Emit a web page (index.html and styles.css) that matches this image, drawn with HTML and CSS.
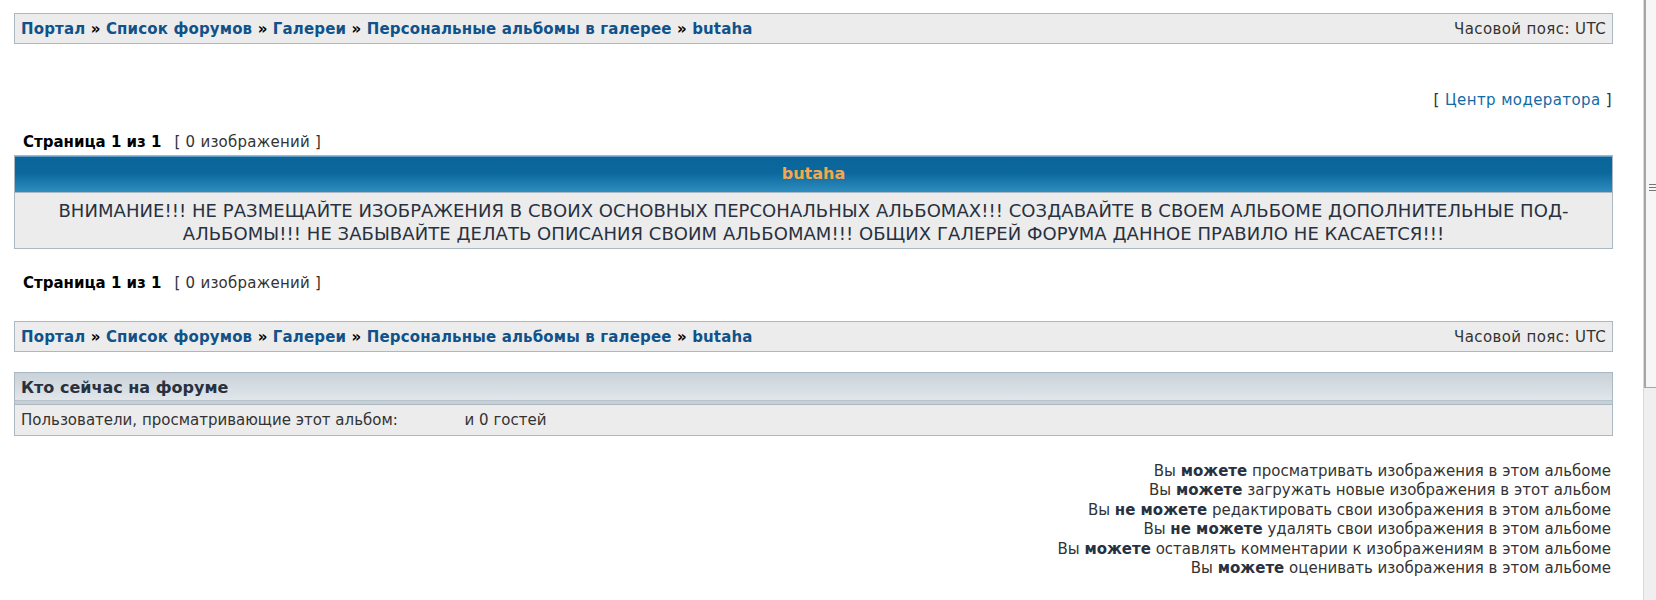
FILE: index.html
```
<!DOCTYPE html>
<html lang="ru">
<head>
    <meta charset="UTF-8">
    <title>butaha - Персональные альбомы в галерее</title>
    <link rel="stylesheet" href="styles.css">
</head>
<body>
    <div class="page">
        <div class="navbar">
            <div class="crumbs">
                <a href="#">Портал</a> <span class="sep">&raquo;</span>
                <a href="#">Список форумов</a> <span class="sep">&raquo;</span>
                <a href="#">Галереи</a> <span class="sep">&raquo;</span>
                <a href="#">Персональные альбомы в галерее</a> <span class="sep">&raquo;</span>
                <a href="#">butaha</a>
            </div>
            <div class="timezone">Часовой пояс: UTC</div>
        </div>

        <div class="mcp-link">[ <a href="#">Центр модератора</a> ]</div>

        <div class="pagination"><b>Страница 1 из 1</b><span class="count">[ 0 изображений ]</span></div>

        <div class="album">
            <div class="album-title">butaha</div>
            <div class="album-desc">ВНИМАНИЕ!!! НЕ РАЗМЕЩАЙТЕ ИЗОБРАЖЕНИЯ В СВОИХ ОСНОВНЫХ ПЕРСОНАЛЬНЫХ АЛЬБОМАХ!!! СОЗДАВАЙТЕ В СВОЕМ АЛЬБОМЕ ДОПОЛНИТЕЛЬНЫЕ ПОД-АЛЬБОМЫ!!! НЕ ЗАБЫВАЙТЕ ДЕЛАТЬ ОПИСАНИЯ СВОИМ АЛЬБОМАМ!!! ОБЩИХ ГАЛЕРЕЙ ФОРУМА ДАННОЕ ПРАВИЛО НЕ КАСАЕТСЯ!!!</div>
        </div>

        <div class="pagination pagination-bottom"><b>Страница 1 из 1</b><span class="count">[ 0 изображений ]</span></div>

        <div class="navbar navbar-bottom">
            <div class="crumbs">
                <a href="#">Портал</a> <span class="sep">&raquo;</span>
                <a href="#">Список форумов</a> <span class="sep">&raquo;</span>
                <a href="#">Галереи</a> <span class="sep">&raquo;</span>
                <a href="#">Персональные альбомы в галерее</a> <span class="sep">&raquo;</span>
                <a href="#">butaha</a>
            </div>
            <div class="timezone">Часовой пояс: UTC</div>
        </div>

        <div class="online">
            <div class="online-head">Кто сейчас на форуме</div>
            <div class="online-row">Пользователи, просматривающие этот альбом: <span class="online-users"></span>и 0 гостей</div>
        </div>

        <div class="rules">
            Вы <b>можете</b> просматривать изображения в этом альбоме<br>
            Вы <b>можете</b> загружать новые изображения в этот альбом<br>
            Вы <b>не можете</b> редактировать свои изображения в этом альбоме<br>
            Вы <b>не можете</b> удалять свои изображения в этом альбоме<br>
            Вы <b>можете</b> оставлять комментарии к изображениям в этом альбоме<br>
            Вы <b>можете</b> оценивать изображения в этом альбоме
        </div>
    </div>

    <!-- полоса прокрутки как на скриншоте -->
    <div class="scrollbar"><div class="thumb"><span class="grip"></span></div></div>
</body>
</html>
```

FILE: styles.css
```
body {
    margin: 0;
    font-family: "DejaVu Sans", Verdana, sans-serif;
    font-size: 15px;
    color: #333;
    background-color: #fff;
}
a {
    text-decoration: none;
}
.page {
    width: 1599px;
    margin: 13px 0 0 14px;
}
.navbar {
    display: flex;
    justify-content: space-between;
    align-items: center;
    height: 29px;
    padding: 0 6px;
    background-color: #ececec;
    border: 1px solid #a9b8c2;
}
.crumbs {
    font-weight: bold;
    letter-spacing: 0.15px;
}
.crumbs a {
    color: #105289;
}
.sep {
    color: #000;
}
.timezone {
    color: #333;
    letter-spacing: 0.4px;
}
.mcp-link {
    text-align: right;
    margin-top: 47px;
    padding-right: 1px;
    letter-spacing: 0.4px;
}
.mcp-link a {
    color: #1569a5;
}
.pagination {
    margin-top: 24px;
    padding-left: 9px;
    line-height: 18px;
}
.pagination b {
    color: #000;
}
.count {
    margin-left: 13px;
    letter-spacing: 0.25px;
}
.album {
    margin-top: 4px;
    border: 1px solid #a9b8c2;
}
.album-title {
    height: 35px;
    line-height: 33px;
    text-align: center;
    font-weight: bold;
    font-size: 16px;
    color: #f7a64a;
    background: linear-gradient(#0a6599 0%, #0b689d 45%, #2f8dbf 100%);
    border-top: 1px solid #5f9bc4;
    border-bottom: 1px solid #a9b8c2;
}
.album-desc {
    padding: 6px 10px 3px;
    text-align: center;
    font-size: 18px;
    line-height: 23px;
    letter-spacing: 0.05px;
    color: #28313f;
    background-color: #ececec;
}
.pagination-bottom {
    margin-top: 25px;
}
.navbar-bottom {
    margin-top: 29px;
}
.online {
    margin-top: 20px;
    border: 1px solid #a9b8c2;
}
.online-head {
    height: 28px;
    line-height: 29px;
    padding-left: 6px;
    font-weight: bold;
    font-size: 16px;
    color: #28313f;
    background: linear-gradient(#c9d2d9, #e2e7eb);
    border-bottom: 3px solid #c8d0d6;
    box-shadow: inset 0 -1px 0 #b8c4cc;
}
.online-row {
    height: 30px;
    line-height: 30px;
    padding-left: 6px;
    background-color: #ececec;
    border-top: 1px solid #a9b8c2;
}
.online-users {
    display: inline-block;
    width: 62px;
}
.rules {
    margin-top: 26px;
    padding-right: 2px;
    text-align: right;
    line-height: 19.4px;
    color: #333;
}
.rules b {
    color: #28313f;
}
.scrollbar {
    position: fixed;
    top: 0;
    right: 0;
    width: 12px;
    height: 100%;
    background-color: #efefef;
    border-left: 1px solid #d8d8d8;
}
.thumb {
    position: relative;
    height: 387px;
    background-color: #f6f6f6;
    border-left: 2px solid #a6a6a6;
    border-bottom: 1px solid #a6a6a6;
}
.grip {
    position: absolute;
    top: 184px;
    left: 3px;
    width: 7px;
    height: 9px;
    background: repeating-linear-gradient(#777 0 1px, transparent 1px 3px);
}
```
